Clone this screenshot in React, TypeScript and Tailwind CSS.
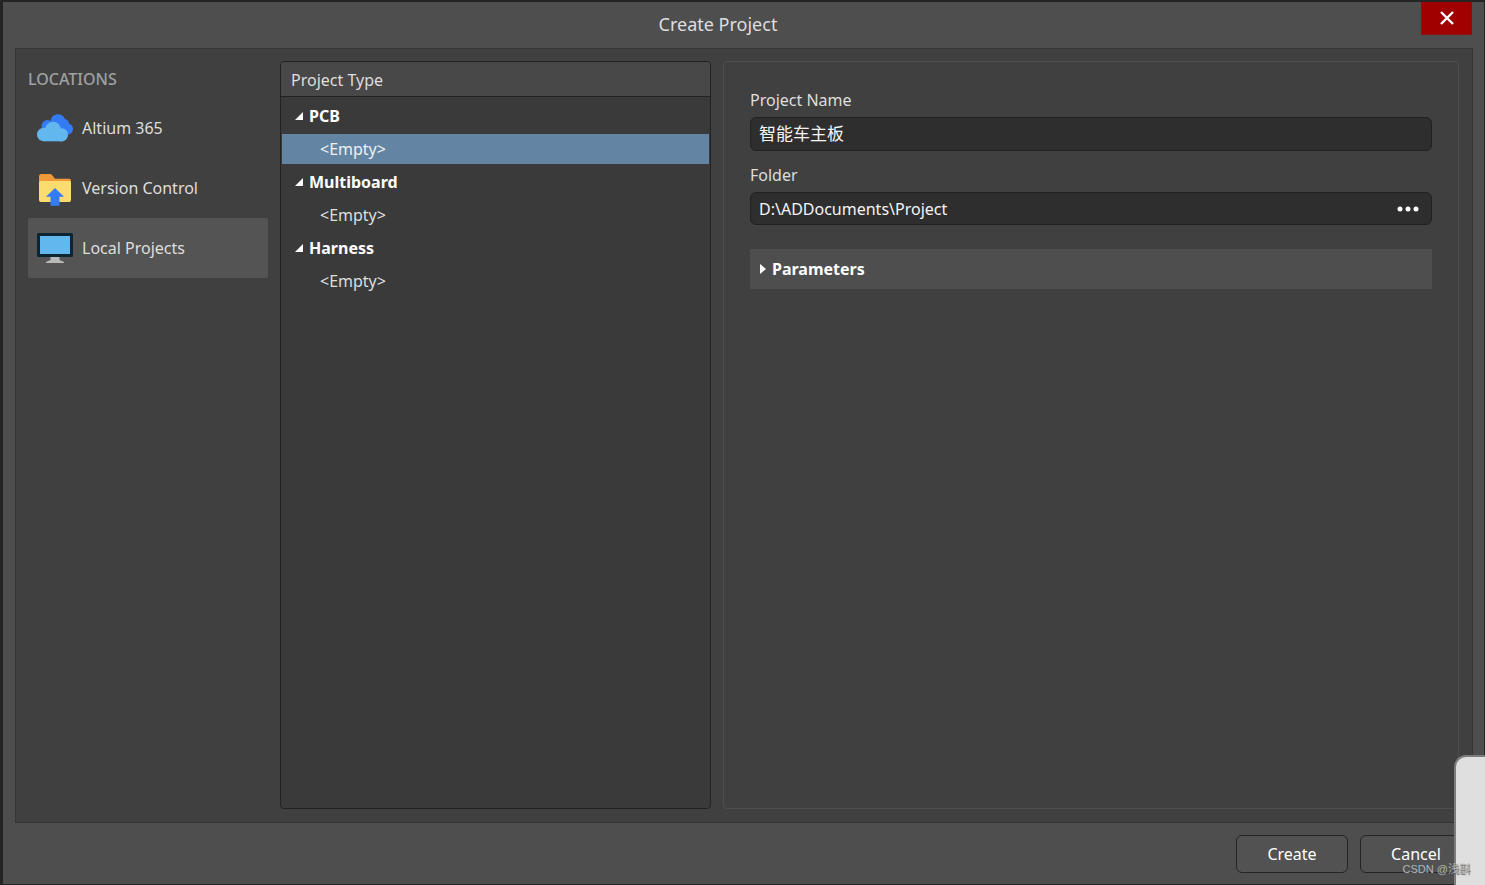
import { useState } from "react";

function CloudIcon() {
  return (
    <svg width="36" height="28" viewBox="0 0 36 28" aria-hidden="true">
      <g fill="#347cf7">
        <circle cx="21" cy="7.500" r="7.300" />
        <circle cx="10.500" cy="12" r="6" />
        <circle cx="26.500" cy="10.500" r="5.800" />
        <circle cx="30.500" cy="15" r="5.500" />
        <rect x="10" y="7" width="20" height="13" />
      </g>
      <g fill="#62b8ee">
        <circle cx="16" cy="15.500" r="7.800" />
        <circle cx="6.800" cy="20.500" r="6.800" />
        <circle cx="24.500" cy="20.800" r="6.600" />
        <rect x="6.500" y="17" width="18" height="10.300" />
      </g>
    </svg>
  );
}

function FolderUploadIcon() {
  return (
    <svg width="36" height="36" viewBox="0 0 36 36" aria-hidden="true">
      <path d="M2 14V6.500A2.500 2.500 0 0 1 4.500 4h8c1.200 0 2 .500 2.700 1.300L18 8.800h14a2 2 0 0 1 2 2V14z" fill="#f29a38" />
      <path d="M2 13a2 2 0 0 1 2-2h28a2 2 0 0 1 2 2v17a2 2 0 0 1-2 2H4a2 2 0 0 1-2-2z" fill="#fadd6e" />
      <path d="M18 18l9 8.700h-4.500v9h-9v-9H9z" fill="#347cf7" />
    </svg>
  );
}

function MonitorIcon() {
  return (
    <svg width="36" height="30" viewBox="0 0 36 30" aria-hidden="true">
      <path d="M13.500 23h9v4l4.500 2v1H9v-1l4.500-2z" fill="#b9b9b9" />
      <rect width="36" height="24" rx="1.500" fill="#0c2530" />
      <rect x="3" y="3" width="30" height="18" fill="#62b8ee" />
    </svg>
  );
}

const locations = [
  { name: "Altium 365", icon: <CloudIcon /> },
  { name: "Version Control", icon: <FolderUploadIcon /> },
  { name: "Local Projects", icon: <MonitorIcon /> },
];

const projectTypes = ["PCB", "Multiboard", "Harness"];

export default function App() {
  const [location, setLocation] = useState("Local Projects");
  const [type, setType] = useState("PCB");
  const [name, setName] = useState("智能车主板");
  const [folder, setFolder] = useState("D:\\ADDocuments\\Project");

  return (
    <div className="relative flex min-h-screen flex-col border-t-2 border-r border-b border-l-3 border-[#242424] bg-[#4e4e4e] font-['Noto_Sans','Noto_Sans_CJK_SC',sans-serif] text-base leading-6 text-[#dedede]">
      <header className="flex h-[46px] items-start pr-3 pl-3">
        <h1 className="flex-1 pt-[10px] text-center text-lg leading-6">Create Project</h1>
        <button
          type="button"
          aria-label="Close"
          className="flex h-[33px] w-[51px] items-center justify-center border border-t-0 border-[#8c1010] bg-[#a00000]"
        >
          <svg width="14" height="14" viewBox="0 0 14 14" aria-hidden="true">
            <path d="M1 1l12 12M13 1L1 13" stroke="#fff" strokeWidth="2.400" />
          </svg>
        </button>
      </header>

      <main className="mr-[11px] ml-3 flex flex-1 gap-3 border border-[#363636] bg-[#404040] p-3 pr-[13px] pb-[13px]">
        <nav aria-label="Locations" className="w-60 shrink-0">
          <h2 className="mt-[6px] mb-[7px] font-medium text-[#a0a0a0]">LOCATIONS</h2>
          <ul>
            {locations.map((item) => (
              <li key={item.name}>
                <button
                  type="button"
                  onClick={() => setLocation(item.name)}
                  className={
                    item.name === location
                      ? "flex h-[60px] w-full items-center gap-[9px] rounded-xs bg-[#545454] px-[9px]"
                      : "flex h-[60px] w-full items-center gap-[9px] rounded-xs px-[9px]"
                  }
                >
                  {item.icon}
                  <span>{item.name}</span>
                </button>
              </li>
            ))}
          </ul>
        </nav>

        <section className="w-[431px] shrink-0 overflow-hidden rounded-sm border border-[#222222] bg-[#3a3a3a]">
          <h2 className="flex h-[35px] items-center border-b border-[#222222] bg-[#484848] px-[10px] pt-px">Project Type</h2>
          <ul className="px-px pt-px">
            {projectTypes.map((group) => (
              <li key={group}>
                <div className="flex h-9 items-center gap-[6px] px-[13px] font-bold text-white">
                  <svg width="8" height="8" viewBox="0 0 8 8" aria-hidden="true">
                    <path d="M8 0v8H0z" fill="#fff" />
                  </svg>
                  {group}
                </div>
                <button
                  type="button"
                  onClick={() => setType(group)}
                  className={
                    group === type
                      ? "flex h-[30px] w-full items-center bg-[#6384a3] px-[38px] text-[#f0f0f0]"
                      : "flex h-[30px] w-full items-center px-[38px]"
                  }
                >
                  &lt;Empty&gt;
                </button>
              </li>
            ))}
          </ul>
        </section>

        <section className="min-w-0 flex-1 rounded-sm border border-[#4e4e4e] px-[26px] pt-[26px]">
          <label htmlFor="project-name" className="block">
            Project Name
          </label>
          <input
            id="project-name"
            value={name}
            onChange={(e) => setName(e.target.value)}
            className="mt-[5px] block h-[34px] w-full rounded-md border border-[#212121] bg-[#2e2e2e] px-2 pb-[3px] text-[17px] text-[#f4f4f4]"
          />
          <label htmlFor="folder" className="mt-3 block">
            Folder
          </label>
          <div className="mt-[5px] flex h-[33px] items-center rounded-md border border-[#212121] bg-[#2e2e2e] pr-3 pl-2">
            <input
              id="folder"
              value={folder}
              onChange={(e) => setFolder(e.target.value)}
              className="min-w-0 flex-1 bg-transparent text-[#f4f4f4]"
            />
            <button type="button" aria-label="Browse">
              <svg width="22" height="6" viewBox="0 0 22 6" aria-hidden="true" fill="#fff">
                <circle cx="3" cy="3" r="2.500" />
                <circle cx="11" cy="3" r="2.500" />
                <circle cx="19" cy="3" r="2.500" />
              </svg>
            </button>
          </div>
          <button
            type="button"
            aria-expanded="false"
            className="mt-6 flex h-10 w-full items-center gap-[6px] bg-[#4e4e4e] px-[10px] font-bold text-white"
          >
            <svg width="6" height="10" viewBox="0 0 6 10" aria-hidden="true">
              <path d="M0 0l6 5-6 5z" fill="#fff" />
            </svg>
            Parameters
          </button>
        </section>
      </main>

      <footer className="flex justify-end gap-3 py-3 pr-3 pb-[11px] text-white">
        <button type="button" className="h-[38px] w-28 rounded-md border border-[#242424] bg-[#525252]">
          Create
        </button>
        <button type="button" className="h-[38px] w-28 rounded-md border border-[#242424] bg-[#525252]">
          Cancel
        </button>
      </footer>

      <div className="absolute -right-px -bottom-px h-[130px] w-[31px] rounded-tl-xl border-t-2 border-l-2 border-[#7c7c7c] bg-[#dfdfdf]" />
      <p className="absolute right-[14px] bottom-[7px] font-['Liberation_Sans','Noto_Sans_CJK_SC',sans-serif] text-[11px] leading-4 text-[#b4b4b4] [text-shadow:1px_1px_1px_#555555]">
        CSDN @浅斟
      </p>
    </div>
  );
}
